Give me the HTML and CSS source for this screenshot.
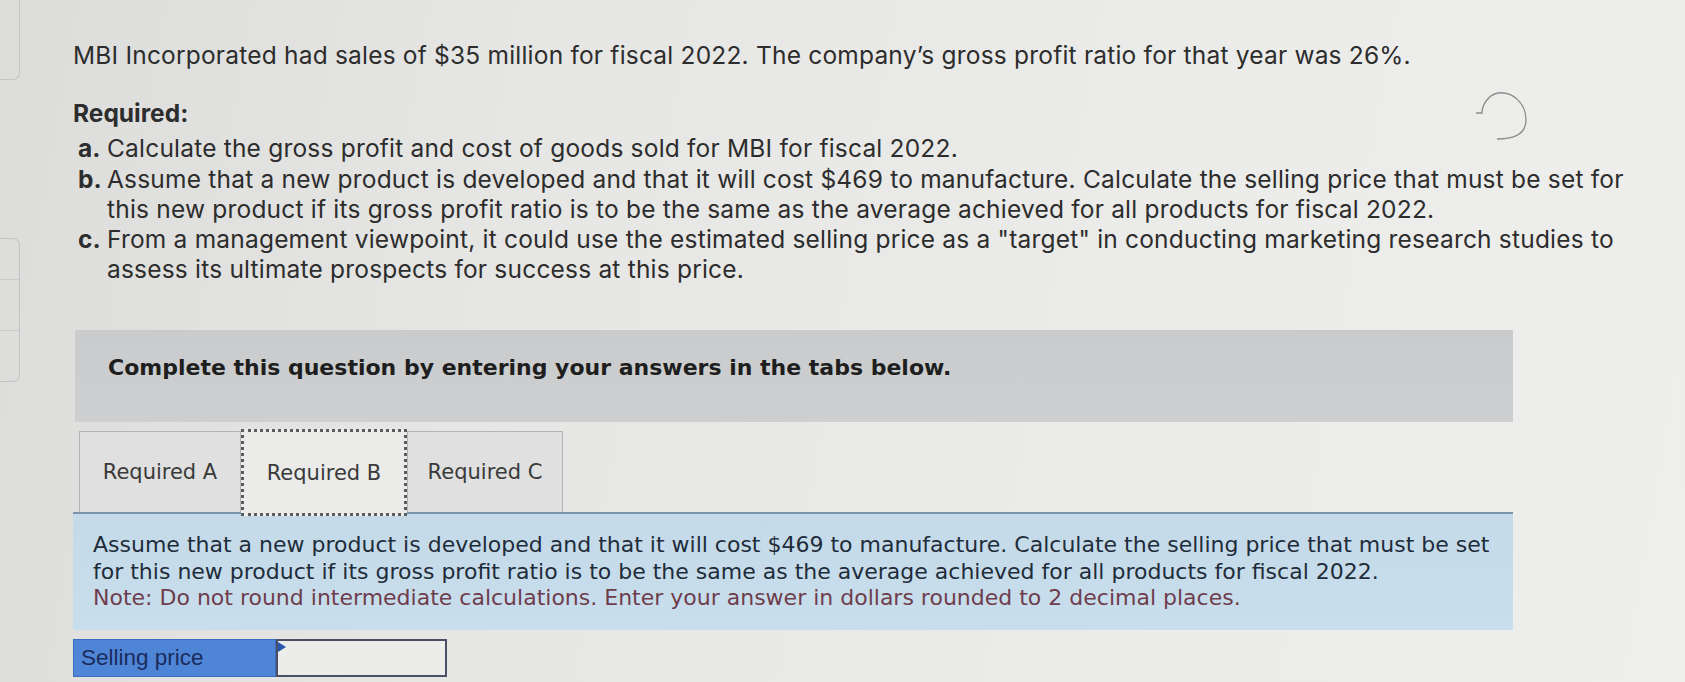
FILE: index.html
```html
<!DOCTYPE html>
<html lang="en">
<head>
<meta charset="utf-8">
<title>MBI Incorporated</title>
<link rel="stylesheet" href="styles.css">
</head>
<body>
<aside class="side">
  <div class="side-top"></div>
  <div class="side-group">
    <div class="side-cell"></div>
    <div class="side-cell"></div>
    <div class="side-cell"></div>
  </div>
</aside>
<main class="main">
  <p class="intro">MBI Incorporated had sales of $35 million for fiscal 2022. The company’s gross profit ratio for that year was 26%.</p>
  <h3 class="req">Required:</h3>
  <div class="items">
    <div class="item"><span class="mark">a.</span><span class="txt">Calculate the gross profit and cost of goods sold for MBI for fiscal 2022.</span></div>
    <div class="item"><span class="mark">b.</span><span class="txt">Assume that a new product is developed and that it will cost $469 to manufacture. Calculate the selling price that must be set for<br>this new product if its gross profit ratio is to be the same as the average achieved for all products for fiscal 2022.</span></div>
    <div class="item"><span class="mark">c.</span><span class="txt">From a management viewpoint, it could use the estimated selling price as a "target" in conducting marketing research studies to<br>assess its ultimate prospects for success at this price.</span></div>
  </div>
  <div class="banner">Complete this question by entering your answers in the tabs below.</div>
  <div class="tabs">
    <div class="tab tab-a">Required A</div>
    <div class="tab tab-b active">Required B</div>
    <div class="tab tab-c">Required C</div>
  </div>
  <div class="panel">
    <p class="ptext">Assume that a new product is developed and that it will cost $469 to manufacture. Calculate the selling price that must be set<br>for this new product if its gross profit ratio is to be the same as the average achieved for all products for fiscal 2022.</p>
    <p class="ptext note">Note: Do not round intermediate calculations. Enter your answer in dollars rounded to 2 decimal places.</p>
  </div>
  <div class="answer">
    <div class="label">Selling price</div>
    <div class="input"></div>
  </div>
</main>
<svg class="scribble" width="62" height="60" viewBox="0 0 62 60" aria-hidden="true">
  <path d="M6 28 L12 28 C12 20 18 10 28 8 C42 6 56 18 56 35 C56 46 48 54 27 54" fill="none" stroke="#8c8c8c" stroke-width="1.3"/>
</svg>
</body>
</html>
```

FILE: styles.css
```css
html, body {
  margin: 0;
  height: 682px;
  overflow: hidden;
}

body {
  position: relative;
  display: flex;
  background: linear-gradient(100deg, #dcdddb 0%, #e6e6e4 30%, #ebebe9 65%, #eeeeec 100%);
  font-family: "Inter", "Lato", "Liberation Sans", sans-serif;
  color: #2d2d2d;
}

.side {
  width: 20px;
  flex: none;
}

.side-top {
  height: 80px;
  border-right: 1px solid #c3c4c3;
  border-bottom: 1px solid #c3c4c3;
  border-bottom-right-radius: 7px;
  box-sizing: border-box;
}

.side-group {
  margin-top: 158px;
  border: 1px solid #c3c4c3;
  border-left: none;
  border-radius: 0 7px 7px 0;
}

.side-cell {
  height: 50px;
  border-bottom: 1px solid #c9cac9;
}

.side-cell:first-child {
  height: 40px;
}

.side-cell:last-child {
  border-bottom: none;
}

.main {
  flex: 1;
  padding: 40px 0 0 53px;
}

.intro {
  margin: 0;
  font-size: 24.5px;
  line-height: 30px;
  letter-spacing: 0.2px;
  white-space: nowrap;
}

.req {
  margin: 28px 0 0;
  font-size: 24.5px;
  line-height: 30px;
  font-weight: 700;
}

.items {
  margin-top: 5px;
  font-size: 24.5px;
  line-height: 30px;
  letter-spacing: 0.2px;
}

.item {
  display: flex;
  padding-left: 5px;
  margin-bottom: 0.5px;
  white-space: nowrap;
}

.mark {
  width: 29px;
  flex: none;
  font-weight: 700;
  letter-spacing: 0;
}

.banner {
  margin: 46px 0 0 2px;
  width: 1438px;
  height: 92px;
  box-sizing: border-box;
  padding: 25px 0 0 33px;
  background: linear-gradient(180deg, #c9cbcc, #cdcfd0);
  font-family: "DejaVu Sans", sans-serif;
  font-weight: 700;
  font-size: 22px;
  line-height: 26px;
  color: #1e1e1e;
}

.tabs {
  display: flex;
  align-items: flex-start;
  margin-top: 9px;
  padding-left: 6px;
  height: 81px;
  position: relative;
  z-index: 1;
}

.tab {
  height: 81px;
  box-sizing: border-box;
  display: flex;
  align-items: center;
  justify-content: center;
  background: #dfe0df;
  border: 1px solid #b1b3b4;
  border-bottom: none;
  font-family: "DejaVu Sans", sans-serif;
  font-size: 21px;
  color: #3a3a3a;
}

.tab-a { width: 162px; }
.tab-c { width: 156px; }

.tab.active {
  width: 166px;
  height: 87px;
  margin-top: -2px;
  background: #ebebea;
  border: 3px dotted #5c5c5c;
}

.panel {
  width: 1440px;
  height: 118px;
  box-sizing: border-box;
  padding: 18px 20px 0;
  background: linear-gradient(180deg, #c4dae9, #c9deec);
  border-top: 2px solid #7b96aa;
}

.ptext {
  margin: 0;
  font-family: "DejaVu Sans", sans-serif;
  font-size: 22px;
  line-height: 26.5px;
  color: #1f2c3a;
  white-space: nowrap;
}

.note {
  color: #6e3d4d;
}

.answer {
  display: flex;
  margin-top: 9px;
  height: 38px;
}

.label {
  width: 203px;
  box-sizing: border-box;
  display: flex;
  align-items: center;
  padding-left: 7px;
  background: #4f85d6;
  border: 1px solid #3a6cc2;
  font-family: "Liberation Sans", Arial, sans-serif;
  font-size: 22.5px;
  color: #1a2c5c;
}

.input {
  width: 171px;
  box-sizing: border-box;
  position: relative;
  background: #ececeb;
  border: 2px solid #4a4f66;
}

.input::before {
  content: "";
  position: absolute;
  left: 0;
  top: 1px;
  border-left: 8px solid #2a57ad;
  border-top: 5px solid transparent;
  border-bottom: 5px solid transparent;
}

.scribble {
  position: absolute;
  left: 1470px;
  top: 85px;
}
```
